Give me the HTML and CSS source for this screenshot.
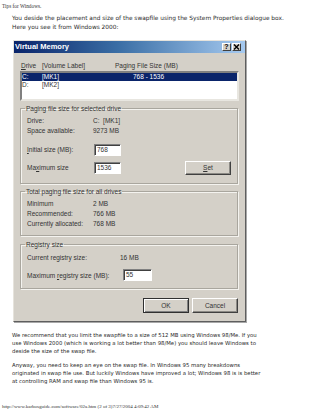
FILE: index.html
```html
<!DOCTYPE html>
<html>
<head>
<meta charset="utf-8">
<title>Tips for Windows.</title>
<link rel="stylesheet" href="styles.css">
</head>
<body>
<div class="page-title">Tips for Windows.</div>
<p class="text intro">You deside the placement and size of the swapfile using the System Properties dialogue box.<br>Here you see it from Windows 2000:</p>

<div class="dialog">
  <div class="titlebar">
    <span class="title">Virtual Memory</span>
    <span class="tbtns">
      <span class="tbtn help">?</span>
      <span class="tbtn close"><svg width="7" height="6" viewBox="0 0 7 6"><path d="M1 0.5 L6 5.5 M6 0.5 L1 5.5" stroke="#000" stroke-width="1.4" fill="none"/></svg></span>
    </span>
  </div>
  <div class="body">
    <div class="list-head"><span><u>D</u>rive</span><span>[Volume Label]</span><span>Paging File Size (MB)</span></div>
    <div class="listbox">
      <div class="row sel"><span>C:</span><span>[MK1]</span><span>768 - 1536</span></div>
      <div class="row"><span>D:</span><span>[MK2]</span><span></span></div>
    </div>

    <fieldset class="group g1">
      <legend>Paging file size for selected drive</legend>
      <div class="kv"><span>Drive:</span><span>C:&nbsp; [MK1]</span><span>Space available:</span><span>9273 MB</span></div>
      <div class="field first"><span class="lbl"><u>I</u>nitial size (MB):</span><span class="input">768</span></div>
      <div class="field second"><span class="lbl">Ma<u>x</u>imum size</span><span class="input">1536</span><span class="btn set"><u>S</u>et</span></div>
    </fieldset>

    <fieldset class="group g2">
      <legend>Total paging file size for all drives</legend>
      <div class="kv"><span>Minimum</span><span>2 MB</span><span>Recommended:</span><span>766 MB</span><span>Currently allocated:</span><span>768 MB</span></div>
    </fieldset>

    <fieldset class="group g3">
      <legend>Registry size</legend>
      <div class="kv reg"><span>Current registry size:</span><span>16 MB</span></div>
      <div class="field reg-field"><span class="lbl">Maximum <u>r</u>egistry size (MB):</span><span class="input">55</span></div>
    </fieldset>

    <div class="buttons">
      <span class="btn default">OK</span>
      <span class="btn">Cancel</span>
    </div>
  </div>
</div>

<p class="text para2">We recommend that you limit the swapfile to a size of 512 MB using Windows 98/Me. If you<br>use Windows 2000 (which is working a lot better than 98/Me) you should leave Windows to<br>deside the size of the swap file.</p>
<p class="text para3">Anyway, you need to keep an eye on the swap file. In Windows 95 many breakdowns<br>originated in swap file use. But luckily Windows have improved a lot; Windows 98 is is better<br>at controlling RAM and swap file than Windows 95 is.</p>

<div class="footer">http://www.karbosguide.com/software/02a.htm (2 of 3)7/27/2004 4:09:42 AM</div>
</body>
</html>
```

FILE: styles.css
```css
* { box-sizing: border-box; }

body {
  margin: 0;
  width: 320px;
  height: 414px;
  overflow: hidden;
  background: #fff;
  color: #222;
  font-family: "DejaVu Sans", Verdana, sans-serif;
}

.page-title {
  font-family: "Liberation Serif", "Times New Roman", serif;
  font-size: 5.3px;
  line-height: 8px;
  padding: 2px 0 0 2px;
  color: #333;
}

.text {
  margin: 0 0 0 12px;
  font-size: 5.35px;
  line-height: 8px;
  color: #2a2a2a;
  white-space: nowrap;
}

.intro {
  margin-top: 4px;
  font-size: 5.85px;
  line-height: 9.3px;
}

.dialog {
  margin: 7px 0 0 13px;
  width: 233px;
  height: 282px;
  background: #d4d0c8;
  border: 1px solid;
  border-color: #e6e3dc #5e5e5e #5e5e5e #e6e3dc;
  box-shadow: 1px 1px 0 #a8a8a8;
  font-family: "Liberation Sans", Arial, sans-serif;
  color: #333;
}

.titlebar {
  height: 12px;
  background: linear-gradient(90deg, #0a246a 0%, #3a6ea5 45%, #a6caf0 100%);
  display: flex;
  align-items: center;
  justify-content: space-between;
  padding: 0 4px 0 1px;
}

.title {
  color: #fff;
  font-weight: bold;
  font-size: 7.5px;
  line-height: 12px;
}

.tbtns {
  display: flex;
  gap: 1px;
}

.tbtn {
  width: 9px;
  height: 8px;
  background: #d4d0c8;
  border: 1px solid;
  border-color: #fff #404040 #404040 #fff;
  display: flex;
  align-items: center;
  justify-content: center;
  font-weight: bold;
  font-size: 7px;
  line-height: 6px;
  color: #000;
}

.body {
  padding: 9px 6px 0 6px;
  font-size: 6.5px;
}

.list-head {
  display: grid;
  grid-template-columns: 21px 73px 1fr;
  padding-left: 1px;
  line-height: 8px;
  height: 8px;
}

.listbox {
  margin-top: 1px;
  height: 30px;
  background: #fff;
  border: 2px solid;
  border-color: #808080 #e8e6e0 #e8e6e0 #808080;
}

.row {
  display: grid;
  grid-template-columns: 20px 91px 1fr;
  height: 8px;
  line-height: 8px;
  color: #333;
}

.row.sel {
  background: #0a246a;
  color: #fff;
}

.group {
  margin: 4px 1px 0 0;
  border: 1px solid #a9a69e;
  box-shadow: inset 1px 1px 0 #f4f3ef, 1px 1px 0 #f4f3ef;
  padding: 0 6px;
  min-width: 0;
}

.group legend {
  padding: 0 1px;
  margin-left: -2px;
  line-height: 8px;
  height: 8px;
}

.kv {
  display: grid;
  grid-template-columns: 66px 1fr;
  line-height: 9.8px;
}

.g1 { padding-top: 3.6px; padding-bottom: 8px; }
.g2 { padding-top: 3.5px; padding-bottom: 6px; }
.g3 { margin-top: 5px; padding-top: 4px; padding-bottom: 7px; }

.field {
  display: flex;
  align-items: center;
}

.field .lbl { width: 67px; flex: none; }

.field.first { margin-top: 8px; height: 12px; }
.field.second { margin-top: 5px; height: 14px; }

.input {
  width: 27px;
  height: 12px;
  background: #fff;
  border: 1px solid;
  border-color: #808080 #fff #fff #808080;
  box-shadow: inset 1px 1px 0 #404040;
  padding-left: 2px;
  line-height: 10px;
  color: #333;
}

.btn {
  width: 46px;
  height: 15px;
  background: #d4d0c8;
  border: 1px solid;
  border-color: #fff #404040 #404040 #fff;
  box-shadow: inset -1px -1px 0 #8c8a85;
  display: flex;
  align-items: center;
  justify-content: center;
  color: #333;
}

.btn.set {
  margin-left: auto;
  height: 14px;
}

.kv.reg { grid-template-columns: 93px 1fr; }

.field.reg-field { margin-top: 7px; height: 12px; }
.field.reg-field .lbl { width: 96px; }
.field.reg-field .input { width: 29px; }

.buttons {
  margin: 9px 1px 0 0;
  display: flex;
  justify-content: flex-end;
  gap: 3px;
}

.btn.default {
  border-color: #303030;
  box-shadow: inset 1px 1px 0 #fff, inset -1px -1px 0 #808080;
}

.para2 { margin-top: 9.5px; }
.para3 { margin-top: 5.5px; }

.footer {
  margin-top: 18px;
  padding-left: 2px;
  font-family: "Liberation Serif", "Times New Roman", serif;
  font-size: 5px;
  line-height: 8px;
  color: #333;
  white-space: nowrap;
}
```
